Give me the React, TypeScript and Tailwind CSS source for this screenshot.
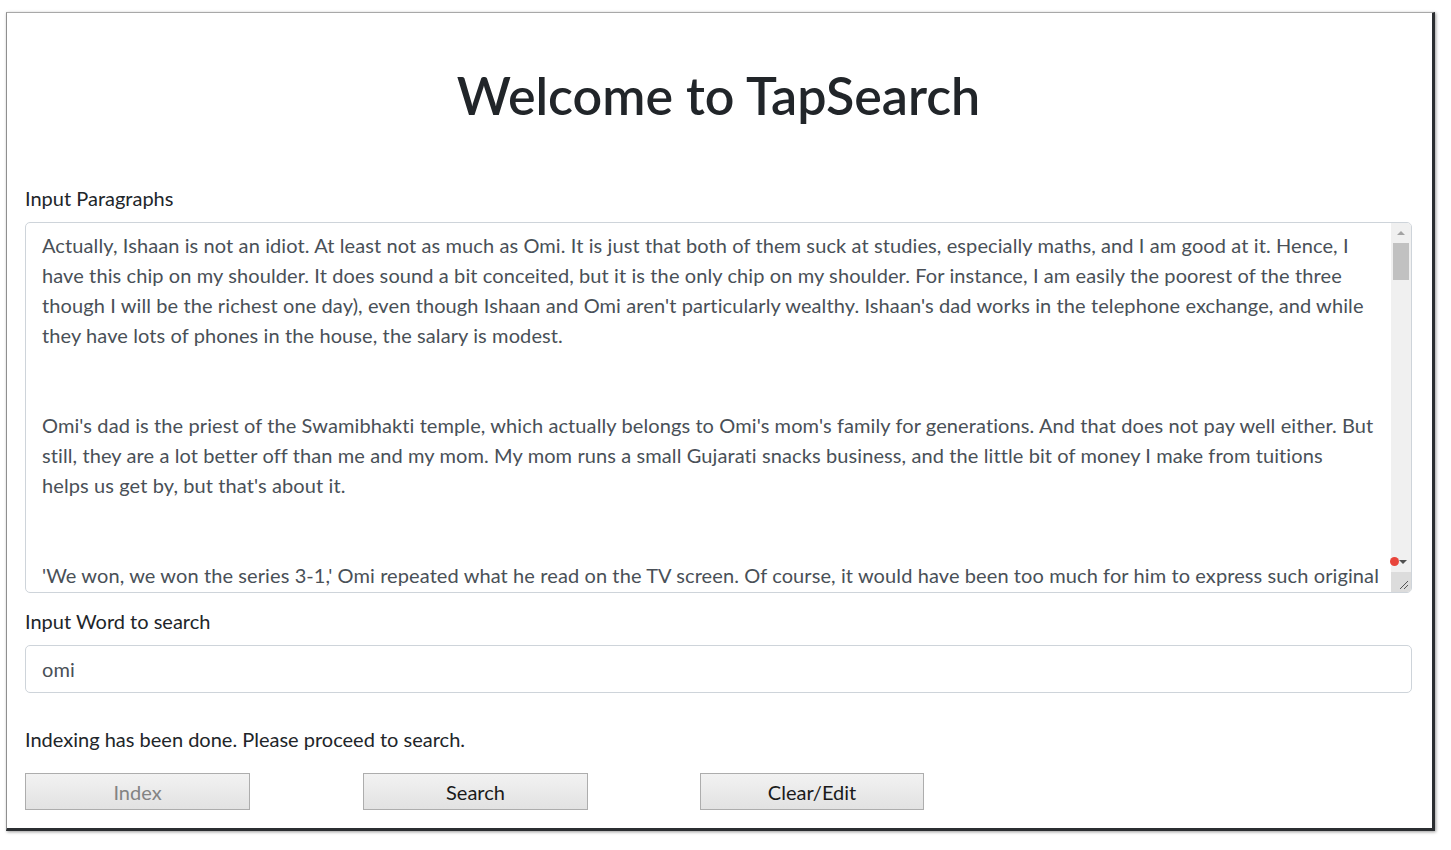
import { useState } from "react";

const PARAGRAPHS = [
  "Actually, Ishaan is not an idiot. At least not as much as Omi. It is just that both of them suck at studies, especially maths, and I am good at it. Hence, I",
  "have this chip on my shoulder. It does sound a bit conceited, but it is the only chip on my shoulder. For instance, I am easily the poorest of the three",
  "though I will be the richest one day), even though Ishaan and Omi aren't particularly wealthy. Ishaan's dad works in the telephone exchange, and while",
  "they have lots of phones in the house, the salary is modest.",
  "",
  "",
  "Omi's dad is the priest of the Swamibhakti temple, which actually belongs to Omi's mom's family for generations. And that does not pay well either. But",
  "still, they are a lot better off than me and my mom. My mom runs a small Gujarati snacks business, and the little bit of money I make from tuitions",
  "helps us get by, but that's about it.",
  "",
  "",
  "'We won, we won the series 3-1,' Omi repeated what he read on the TV screen. Of course, it would have been too much for him to express such original",
  "thoughts himself.",
].join("\n");

function FakeScrollbar() {
  return (
    <div className="pointer-events-none absolute top-px right-px bottom-px w-[20px] flex flex-col bg-[#f0f0f0] rounded-r-[4px]">
      <div className="h-[20px] flex items-center justify-center">
        <div className="w-0 h-0 border-l-[4px] border-r-[4px] border-b-[4px] border-l-transparent border-r-transparent border-b-[#a3a3a3]" />
      </div>
      <div className="mx-[2px] h-[37px] bg-[#c1c1c1]" />
      <div className="flex-1" />
      <div className="h-[20px] flex items-center justify-center relative">
        <div className="w-0 h-0 border-l-[4px] border-r-[4px] border-t-[4px] border-l-transparent border-r-transparent border-t-[#505050] ml-[4px]" />
        <div className="absolute left-[-1px] top-[5px] w-[9px] h-[9px] rounded-full bg-[#e8453c]" />
      </div>
      <div className="h-[20px] bg-[#dcdcdc] rounded-br-[4px] flex items-end justify-end">
        <svg width="12" height="12" viewBox="0 0 12 12" className="mr-[2px] mb-[2px]">
          <line x1="11" y1="3" x2="3" y2="11" stroke="#555" strokeWidth="1" />
          <line x1="11" y1="7" x2="7" y2="11" stroke="#555" strokeWidth="1" />
        </svg>
      </div>
    </div>
  );
}

export default function App() {
  const [text, setText] = useState(PARAGRAPHS);
  const [word, setWord] = useState("omi");

  return (
    <div
      className="min-h-screen bg-white pt-[12px] pl-[6px]"
      style={{ fontFamily: "Lato, 'Noto Sans', sans-serif" }}
    >
      <div className="w-[1429px] h-[819px] border-t border-l border-t-[#a8a8a8] border-l-[#8f8f8f] border-r-[3px] border-b-[3px] border-r-[#2b2e31] border-b-[#2b2e31] shadow-[1px_1px_3px_rgba(0,0,0,0.4)] pl-[18px] pr-[20px] text-[#212529]">
        {/* Header */}
        <h1 className="pt-[51px] text-center text-[52px] leading-[62px] font-semibold">
          Welcome to TapSearch
        </h1>

        <label className="block mt-[58px] text-[20px] leading-[28px]">Input Paragraphs</label>
        <div className="relative mt-[10px]">
          <textarea
            value={text}
            onChange={(e) => setText(e.target.value)}
            wrap="off"
            className="block w-full h-[371px] resize-none overflow-hidden [scrollbar-width:none] border border-[#ced4da] rounded-[5px] pl-[16px] pr-[36px] pt-[7px] text-[20px] leading-[30px] tracking-[0.1px] text-[#495057] outline-none"
          />
          <FakeScrollbar />
        </div>

        <label className="block mt-[14px] text-[20px] leading-[28px]">Input Word to search</label>
        <input
          value={word}
          onChange={(e) => setWord(e.target.value)}
          className="block w-full mt-[10px] h-[48px] border border-[#ced4da] rounded-[5px] px-[16px] text-[20px] tracking-[0.1px] text-[#495057] outline-none"
        />

        <p className="mt-[32px] text-[20px] leading-[28px]">Indexing has been done. Please proceed to search.</p>

        <div className="flex gap-[113px] mt-[20px]">
          <button
            disabled
            className="w-[225px] h-[37px] border border-[#adadad] bg-gradient-to-b from-[#f2f2f2] to-[#e2e2e2] text-[20px] text-[#838383]"
          >
            Index
          </button>
          <button className="w-[225px] h-[37px] border border-[#adadad] bg-gradient-to-b from-[#f2f2f2] to-[#e2e2e2] text-[20px] text-[#1a1a1a]">
            Search
          </button>
          <button className="w-[224px] h-[37px] -ml-px border border-[#adadad] bg-gradient-to-b from-[#f2f2f2] to-[#e2e2e2] text-[20px] text-[#1a1a1a]">
            Clear/Edit
          </button>
        </div>
      </div>
    </div>
  );
}
